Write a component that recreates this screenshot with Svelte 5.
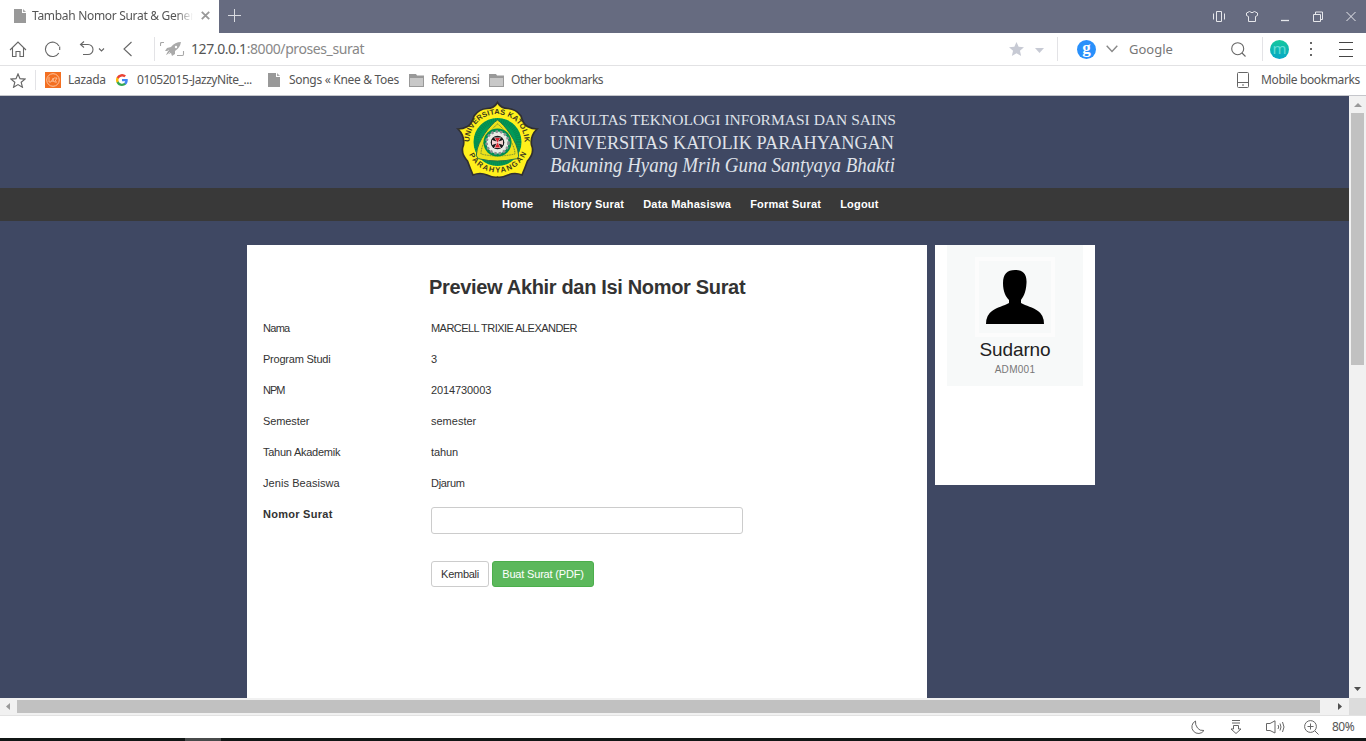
<script>
  const fields = [
    ['Nama', 'MARCELL TRIXIE ALEXANDER', -0.7, -0.54],
    ['Program Studi', '3', -0.22, 0],
    ['NPM', '2014730003', -1, -0.1],
    ['Semester', 'semester', -0.1, 0],
    ['Tahun Akademik', 'tahun', -0.25, -0.1],
    ['Jenis Beasiswa', 'Djarum', 0.07, -0.3]
  ];
  const menu = ['Home', 'History Surat', 'Data Mahasiswa', 'Format Surat', 'Logout'];
  let nomor = $state('');
</script>

{#snippet page()}
  <svg width="12" height="14" viewBox="0 0 12 14"><path d="M0 0H8V4H12V14H0Z" fill="#999" /><path d="M9 0L12 3H9Z" fill="#aaa" /></svg>
{/snippet}

{#snippet folder()}
  <svg width="15" height="13" viewBox="0 0 15 13"><path d="M0 0H7L8 1.5H15V13H0Z" fill="#999" /><path d="M1 4H14V12H1Z" fill="#c8c8c8" /></svg>
{/snippet}

<div class="browser">
  <header class="titlebar">
    <div class="tab">
      {@render page()}
      <span class="tabtitle">Tambah Nomor Surat &amp; Gener</span>
      <svg class="close" width="9" height="9" viewBox="0 0 9 9"><path d="M.8.8L8.2 8.2M8.2.8L.8 8.2" stroke="#999" stroke-width="1.8" /></svg>
    </div>
    <svg class="plus" width="13" height="13" viewBox="0 0 13 13"><path d="M6.5 0V13M0 6.5H13" stroke="#d9dbe1" /></svg>
    <div class="window">
      <svg width="12" height="11" viewBox="0 0 12 11"><path d="M.5 2.500V8.500M3.500.5H8.500V10.500H3.500ZM11.500 2.500V8.500" /></svg>
      <svg width="12" height="11" viewBox="0 0 12 11"><path d="M3.500.5Q6 3 8.500.5L11.500 2V4.500L9.500 5.500V10.500H2.500V5.500L.5 4.500V2Z" /></svg>
      <svg width="8" height="11" viewBox="0 0 8 11"><path d="M0 9.500H8" stroke-width="1.3" /></svg>
      <svg width="10" height="11" viewBox="0 0 10 11"><path d="M.5 3.500H7.500V10.500H.5ZM2.500 3V1H9.500V8.500H8" /></svg>
      <svg width="10" height="11" viewBox="0 0 10 11"><path d="M.5 1L9.500 10M9.500 1L.5 10" /></svg>
    </div>
  </header>

  <div class="address">
    <svg width="18" height="17" viewBox="0 0 18 17"><path d="M1 9L9 1L17 9M3.500 7V15.500H7V10.500H11V15.500H14.500V7" /></svg>
    <svg class="reload" width="17" height="17" viewBox="0 0 17 17"><path d="M14.800 12A7.200 7.200 0 1 1 15 5M15.700 5.500V9" /></svg>
    <svg class="undo" width="26" height="16" viewBox="0 0 26 16"><path d="M5 .5L1.500 3.500L5 6.500M1.500 3.500H9A5 5 0 0 1 9 13.500H4" /><path d="M20 7.500L22.500 10L25 7.500" /></svg>
    <svg class="back" width="10" height="16" viewBox="0 0 10 16"><path d="M8.500 1L1 8L8.500 15" /></svg>
    <i class="sep s1"></i>
    <svg class="rocket" width="25" height="15" viewBox="0 0 25 15"><path d="M.5 4V1.500Q.5.500 2 .5H4M17 13.500H22.500Q23.500 13.500 23.500 12V9" stroke="#a8a8a8" fill="none" /><path d="M21 0Q15 0 11 5L7 6L5 9L8 9L6 13L11 11L12 14L15 12V9Q20 6 21 0Z" fill="#aaa" stroke="none" /><circle cx="16" cy="5" r="1.2" fill="#fff" stroke="none" /><path d="M5 11L9 8M6 14L10 10" stroke="#fff" stroke-width=".6" /></svg>
    <span class="url"><b>127.0.0.1</b>:8000/proses_surat</span>
    <svg class="star" width="15" height="14" viewBox="0 0 16 15"><path d="M8 0L10.300 5.100L16 5.600L11.700 9.300L13 15L8 12L3 15L4.300 9.300L0 5.600L5.700 5.100Z" /></svg>
    <svg class="drop" width="9" height="5" viewBox="0 0 9 5"><path d="M0 0H9L4.500 5Z" /></svg>
    <i class="sep s2"></i>
    <span class="g">g</span>
    <svg class="chev" width="12" height="8" viewBox="0 0 12 8"><path d="M.7.8L6 6.500L11.300.8" /></svg>
    <span class="google">Google</span>
    <svg class="search" width="15" height="15" viewBox="0 0 15 15"><circle cx="6.700" cy="6.700" r="6" /><path d="M11 11L14.500 14.500" /></svg>
    <i class="sep s3"></i>
    <span class="m">m</span>
    <svg class="dots" width="2" height="14" viewBox="0 0 2 14"><path d="M0 0H2V2H0ZM0 6H2V8H0ZM0 12H2V14H0Z" /></svg>
    <svg class="ham" width="14" height="15" viewBox="0 0 14 15"><path d="M0 .5H14M0 7.500H14M0 14.500H14" /></svg>
  </div>

  <div class="bookmarks">
    <svg class="bstar" width="16" height="15" viewBox="0 0 16 15"><path d="M8 1L10 5.700L15 6.100L11.200 9.300L12.400 14.200L8 11.600L3.600 14.200L4.800 9.300L1 6.100L6 5.700Z" /></svg>
    <i class="sep s4"></i>
    <svg class="laz" width="16" height="16" viewBox="0 0 16 16"><path d="M0 0H16V16H0Z" fill="#f36f21" /><circle cx="8" cy="8" r="6.300" fill="none" stroke="#ffc39b" /><path d="M4 5V10H6L8.300 6V10M6.800 9H8M9 6H12L9.500 10H12" fill="none" stroke="#ffc39b" stroke-width=".9" /></svg>
    <span class="lz">Lazada</span>
    <svg class="gg" width="12" height="12" viewBox="0 0 24 24"><path d="M23.500 12.300c0-.8-.1-1.600-.2-2.300H12v4.600h6.500a5.500 5.500 0 0 1-2.400 3.600v3h3.900c2.200-2 3.500-5.100 3.500-8.900z" fill="#4285f4" /><path d="M12 24c3.200 0 6-1.100 8-2.900l-3.900-3a7.200 7.200 0 0 1-10.800-3.800h-4v3.100A12 12 0 0 0 12 24z" fill="#34a853" /><path d="M5.300 14.300a7.100 7.100 0 0 1 0-4.600V6.600h-4a12 12 0 0 0 0 10.800z" fill="#fbbc05" /><path d="M12 4.800c1.800 0 3.300.6 4.600 1.800L20 3.200A12 12 0 0 0 1.300 6.600l4 3.100A7.200 7.200 0 0 1 12 4.800z" fill="#ea4335" /></svg>
    <span class="jz">01052015-JazzyNite_...</span>
    {@render page()}
    <span class="sg">Songs « Knee &amp; Toes</span>
    {@render folder()}
    <span class="rf">Referensi</span>
    {@render folder()}
    <span class="ob">Other bookmarks</span>
    <svg class="phone" width="12" height="16" viewBox="0 0 12 16"><rect x=".5" y=".5" width="11" height="15" rx="1" /><path d="M0 10.500H12M5 13H7" /></svg>
    <span class="mb">Mobile bookmarks</span>
  </div>

  <div class="view">
    <main>
      <div class="banner">
        <svg width="470" height="92" viewBox="0 0 470 92">
          <defs>
            <path id="top" d="M16 51A27.500 27.500 0 1 1 70 51" />
            <path id="bottom" d="M12 45A31.500 31.500 0 0 0 75 45" />
          </defs>
          <path d="M43.500 6.500Q47 12.500 54 12.500Q62 13 67 20Q69 28 73.500 30.500Q78 33 83 33Q76 40 77.500 49Q81 57 73.500 65Q71 72 68 79Q61 76 54 79Q47 82 43.500 81Q40 82 33 79Q26 76 19 79Q16 72 13.500 65Q6 57 9.500 49Q11 40 4 33Q9 33 13.500 30.500Q18 28 20 20Q25 13 33 12.500Q40 12.500 43.500 6.500Z" fill="#fff01c" stroke="#302f31" stroke-width="1.700" />
          <circle cx="43.500" cy="46" r="24" fill="#009b58" />
          <circle cx="43.500" cy="46" r="21" fill="none" stroke="#08864c" stroke-width="5" stroke-dasharray="1 1" />
          <path d="M43.500 24C50 28 64 46 64.500 59Q65 63 61 63Q43 67 26 63Q22 62 22.500 58C23 45 37 28 43.500 24Z" fill="#ece21b" stroke="#24734b" />
          <path d="M43.500 28C50 32 61 49 61 58Q43 62 27 58C27 48 36 34 43.500 28Z" fill="#ece21b" stroke="#66823a" stroke-width="1" stroke-dasharray="1 .7" />
          <circle cx="43.500" cy="46.500" r="14" fill="#008d52" />
          <circle cx="43.500" cy="46.500" r="11" fill="#e9ebe5" stroke="#8b8f93" stroke-width="2.600" stroke-dasharray="2.500 2" />
          <circle cx="43.500" cy="46.500" r="6.800" fill="#18191c" />
          <path d="M40 41.500H47L44.500 45.500L49 44V49L44.500 47.500L47 52H40L42.500 47.500L38 49V44L42.500 45.500Z" fill="#f4d4d4" /><path d="M41 42H46L43.500 46.500ZM41 51.500H46L43.500 46.500Z" fill="#da2630" />
          <g font-family="Liberation Sans" font-size="7.500" font-weight="bold" fill="#3d3a1c"><text><textPath href="#top" startOffset="5" textLength="87" lengthAdjust="spacing">UNIVERSITAS KATOLIK</textPath></text><text><textPath href="#bottom" startOffset="14" textLength="72" lengthAdjust="spacing">PARAHYANGAN</textPath></text></g>
          <g font-family="Liberation Serif" fill="#dfe2e9">
            <text x="96" y="29" font-size="15.500" textLength="346" lengthAdjust="spacingAndGlyphs">FAKULTAS TEKNOLOGI INFORMASI DAN SAINS</text>
            <text x="96" y="52.500" font-size="19.500" textLength="344" lengthAdjust="spacingAndGlyphs">UNIVERSITAS KATOLIK PARAHYANGAN</text>
            <text x="96" y="76" font-size="20" font-style="italic" textLength="345" lengthAdjust="spacingAndGlyphs">Bakuning Hyang Mrih Guna Santyaya Bhakti</text>
          </g>
        </svg>
      </div>
      <nav>{#each menu as item}<span>{item}</span>{/each}</nav>
      <div class="columns">
        <section class="panel">
          <h1>Preview Akhir dan Isi Nomor Surat</h1>
          {#each fields as [label, value, labelSpacing, valueSpacing]}
            <div class="row"><span style:letter-spacing="{labelSpacing}px">{label}</span><span style:letter-spacing="{valueSpacing}px">{value}</span></div>
          {/each}
          <div class="row nomor"><label for="nomor">Nomor Surat</label><input id="nomor" bind:value={nomor} /></div>
          <div class="buttons"><button class="kembali">Kembali</button><button class="buat">Buat Surat (PDF)</button></div>
        </section>
        <aside>
          <div class="profile">
            <div class="avatar"><svg width="58" height="54" viewBox="0 0 58 54"><path d="M29 0C37 0 41 4 40.500 13C40 23 37 27 35 30V33C40 36 47 37 52 41Q58 45 58 54H0Q0 45 6 41C11 37 18 36 23 33V30C20 27 17 22 17 13C17 4 21 0 29 0Z" /></svg></div>
            <div class="name">Sudarno</div>
            <div class="code">ADM001</div>
          </div>
        </aside>
      </div>
    </main>
    <div class="vscroll">
      <svg width="17" height="17" viewBox="0 0 17 17"><path d="M5 11H13L9 7Z" fill="#999" /></svg>
      <div class="vthumb"></div>
      <svg class="down" width="17" height="17" viewBox="0 0 17 17"><path d="M5 6H12L8.500 10Z" fill="#505050" /></svg>
    </div>
  </div>
  <div class="hscroll">
    <svg width="17" height="17" viewBox="0 0 17 17"><path d="M10 5V12L6 8.500Z" fill="#999" /></svg>
    <div class="hthumb"></div>
    <svg class="right" width="17" height="17" viewBox="0 0 17 17"><path d="M6 5V12L10 8.500Z" fill="#505050" /></svg>
    <div class="corner"></div>
  </div>
  <footer>
    <svg class="moon" width="14" height="15" viewBox="0 0 14 15"><path d="M4.500 1A6.600 6.600 0 1 0 13 10.500Q8.500 11 6.500 8Q4 5 4.500 1Z" /></svg>
    <svg class="dl" width="12" height="15" viewBox="0 0 12 15"><path d="M2 .5H10M2 3H10M3.500 5.500H8.500V9H11L6 13.500L1 9H3.500Z" /></svg>
    <svg class="vol" width="19" height="14" viewBox="0 0 19 14"><path d="M.5 3.500H4L9 .8V13L4 10.500H.5ZM12 5Q13.500 7 12 9M14 3.500Q16 7 14 10.500M16.500 2Q19.500 7 16.500 12" /></svg>
    <svg class="zoom" width="15" height="15" viewBox="0 0 15 15"><circle cx="6.500" cy="6.500" r="5.900" /><path d="M3.500 6.500H9.500M6.500 3.500V9.500M11 11L14.500 14.500" /></svg>
    <span>80%</span>
  </footer>
  <div class="edge"><i></i></div>
</div>

<style>
  :global(body) { margin: 0; overflow: hidden; background: #fff; }
  .browser { width: 1366px; height: 741px; display: flex; flex-direction: column; overflow: hidden; font: 12px/16px "Noto Sans", sans-serif; color: #555; white-space: nowrap; }
  svg { display: block; flex-shrink: 0; fill: none; stroke: none; }
  .titlebar { height: 33px; flex-shrink: 0; background: #666b80; display: flex; align-items: center; }
  .tab { width: 219px; height: 33px; box-sizing: border-box; background: #fff; display: flex; align-items: center; padding: 0 9px 2px 14px; }
  .tabtitle { width: 166px; margin-left: 6px; letter-spacing: -.31px; mask-image: linear-gradient(90deg, #000 144px, transparent 161px); }
  .close { margin-left: auto; }
  .plus { margin: -3px 0 0 9px; }
  .window { margin: -1px 10px 0 auto; display: flex; align-items: center; }
  .window svg { stroke: #e6e7eb; }
  .window svg:nth-child(2) { margin-left: 21px; }
  .window svg:nth-child(3) { margin-left: 23px; }
  .window svg:nth-child(4) { margin-left: 24px; }
  .window svg:nth-child(5) { margin-left: 23px; }
  .address { height: 33px; flex-shrink: 0; box-sizing: border-box; border-bottom: 1px solid #e2e2e4; display: flex; align-items: center; padding-left: 9px; background: #fff; }
  .address svg { stroke: #666; stroke-width: 1.1; }
  .sep { width: 1px; height: 24px; background: #e3e3e6; flex-shrink: 0; }
  .address .reload { margin-left: 17px; }
  .address .undo { margin-left: 18px; }
  .address .back { margin-left: 18px; }
  .s1 { margin-left: 21px; }
  .address .rocket { margin-left: 5px; }
  .url { margin-left: 6px; width: 818px; font-size: 14px; line-height: 20px; color: #888; letter-spacing: -.41px; }
  .url b { font-weight: 400; color: #555; }
  .address .star, .address .drop { fill: #c7cad4; stroke: none; }
  .address .drop { margin: 2px 0 0 11px; }
  .s2 { margin-left: 13px; }
  .g { width: 19px; height: 19px; border-radius: 50%; background: #2990fb; color: #fff; margin-left: 19px; font: bold 17px/15px "Liberation Serif", serif; text-align: center; }
  .address .chev { margin-left: 10px; stroke: #888; stroke-width: 1.400; }
  .google { margin-left: 11px; width: 102px; font-size: 13px; color: #777; }
  .s3 { margin-left: 16px; }
  .m { width: 19px; height: 19px; border-radius: 50%; background: linear-gradient(#14c89d, #07a7c6); color: #65ddd6; margin-left: 7px; text-align: center; font: 15px/17px "Noto Sans", sans-serif; }
  .address .dots { fill: #666; stroke: none; margin-left: 21px; }
  .address .ham { margin-left: 27px; stroke: #444; }
  .bookmarks { height: 30px; flex-shrink: 0; box-sizing: border-box; border-bottom: 1px solid #c5c6cb; display: flex; align-items: center; padding: 0 6px 1px 10px; background: #fff; }
  .bstar { stroke: #666; stroke-width: 1.200; }
  .s4 { height: 20px; margin-left: 9px; }
  .laz { margin-left: 9px; }
  .lz { width: 36px; margin-left: 7px; letter-spacing: -.3px; }
  .gg { margin-left: 12px; }
  .jz { margin-left: 9px; width: 131px; letter-spacing: -.44px; }
  .sg { margin-left: 9px; width: 120px; letter-spacing: -.31px; }
  .rf { margin-left: 7px; width: 58px; letter-spacing: -.5px; }
  .ob { margin-left: 7px; letter-spacing: -.48px; }
  .phone { stroke: #666; margin-left: auto; }
  .mb { margin-left: 12px; width: 99px; letter-spacing: -.38px; }
  .view { height: 602px; flex-shrink: 0; display: flex; }
  main { width: 1349px; background: #3f4863; font-family: "Liberation Sans", Arial, sans-serif; color: #333; overflow: hidden; }
  .banner { height: 92px; display: flex; padding-left: 454px; }
  nav { height: 33px; background: #393939; display: flex; gap: 19px; padding-left: 502px; font-size: 11px; line-height: 33px; font-weight: 700; color: #fff; letter-spacing: .21px; }
  .columns { display: flex; gap: 8px; padding: 24px 0 0 247px; align-items: flex-start; }
  .panel { width: 680px; height: 460px; background: #fff; box-sizing: border-box; padding: 31px 16px 0; }
  h1 { margin: 0 0 22px 166px; font-size: 20px; line-height: 22px; height: 22px; font-weight: 700; letter-spacing: -.33px; }
  .row { height: 31px; display: grid; grid-template-columns: 168px 312px; font-size: 11px; line-height: 16px; }
  .nomor { height: 55px; font-weight: 700; letter-spacing: .27px; }
  input { box-sizing: border-box; width: 312px; height: 27px; border: 1px solid #ccc; border-radius: 3px; margin: 1px 0 0; padding: 3px 8px; background: #fff; outline: 0; }
  .buttons { display: flex; gap: 3px; padding-left: 168px; }
  button { height: 26px; box-sizing: border-box; border: 1px solid #ccc; border-radius: 3px; padding: 0; font: 11px/15px "Liberation Sans", Arial, sans-serif; color: #333; background: #fff; }
  .kembali { width: 58px; letter-spacing: -.28px; }
  .buat { width: 102px; color: #fff; background: #5cb85c; border-color: #4cae4c; letter-spacing: -.18px; }
  aside { width: 160px; height: 240px; background: #fff; display: flex; justify-content: center; align-items: flex-start; }
  .profile { width: 136px; height: 141px; background: #f7f9f9; box-sizing: border-box; padding-top: 12px; display: flex; flex-direction: column; align-items: center; }
  .avatar { width: 80px; height: 80px; box-sizing: border-box; border: 4px solid #fcfcfc; display: flex; justify-content: center; padding-top: 9px; background: #f7f9f9; }
  .avatar svg { fill: #000; }
  .name { margin-top: 1px; font-size: 19px; line-height: 24px; color: #222; letter-spacing: -.1px; }
  .code { font-size: 10px; line-height: 16px; color: #777; letter-spacing: .3px; }
  .vscroll { width: 17px; background: #f1f1f1; display: flex; flex-direction: column; align-items: center; }
  .vthumb { width: 13px; height: 252px; background: #c1c1c1; }
  .down { margin-top: auto; }
  .hscroll { height: 18px; flex-shrink: 0; box-sizing: border-box; border-bottom: 1px solid #e2e2e2; background: #f1f1f1; display: flex; align-items: center; }
  .hthumb { width: 1303px; height: 13px; background: #c1c1c1; }
  .right { margin-left: 12px; }
  .corner { width: 17px; height: 17px; background: #dcdcdc; }
  footer { height: 22px; flex-shrink: 0; background: #fff; display: flex; align-items: center; padding: 0 12px 0 1191px; }
  footer svg { stroke: #666; }
  .dl { margin-left: 25px; }
  .vol { margin-left: 24px; }
  .zoom { margin-left: 19px; }
  footer span { margin-left: 13px; letter-spacing: -.5px; }
  .edge { height: 3px; background: #111615; display: flex; }
  .edge i { margin-left: 185px; width: 36px; background: #484b4b; }
</style>
